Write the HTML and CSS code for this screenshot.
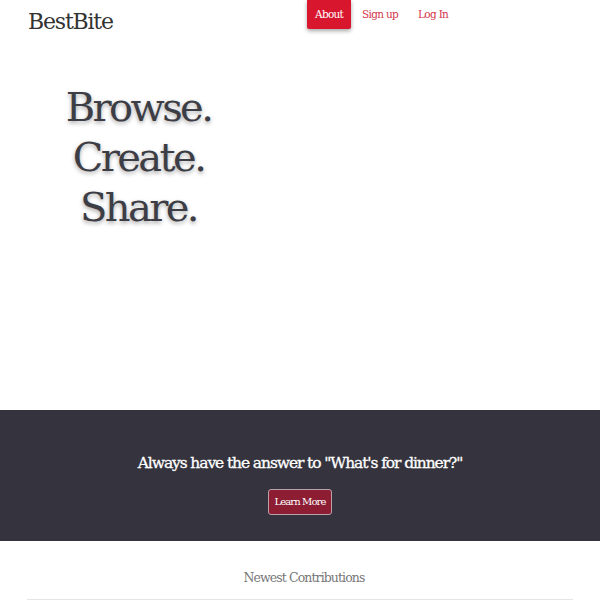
FILE: index.html
```html
<!DOCTYPE html>
<html>
<head>
<meta charset="utf-8">
<link rel="stylesheet" href="styles.css">
</head>
<body>
<header class="topbar">
  <div class="brand">BestBite</div>
  <nav class="nav">
    <a class="nav-link active">About</a>
    <a class="nav-link">Sign up</a>
    <a class="nav-link">Log In</a>
  </nav>
</header>
<section class="hero">
  <h1 class="hero-title">Browse.<br>Create.<br>Share.</h1>
</section>
<section class="band">
  <h2 class="band-title">Always have the answer to "What's for dinner?"</h2>
  <a class="band-btn">Learn More</a>
</section>
<section class="newest">
  <h3 class="newest-title">Newest Contributions</h3>
  <hr class="rule">
</section>
</body>
</html>
```
FILE: styles.css
```css
* { box-sizing: border-box; }
body {
  margin: 0;
  font-family: "DejaVu Serif", serif;
  background: #fff;
  color: #333;
}
.topbar {
  display: flex;
  align-items: flex-start;
  height: 40px;
}
.brand {
  font-size: 22px;
  color: #333;
  padding: 9px 0 0 28px;
  width: 307px;
  letter-spacing: -1.2px;
}
.nav {
  display: flex;
  align-items: flex-start;
}
.nav-link {
  font-size: 10.5px;
  color: #d4364a;
  padding: 8px 10px;
  height: 29px;
  letter-spacing: -0.7px;
}
.nav-link.active {
  background: #d8172f;
  color: #fff;
  border-radius: 0 0 2px 2px;
  box-shadow: 0 2px 4px rgba(0,0,0,0.35);
  padding: 8px 8px;
}
.nav-link + .nav-link { padding-left: 11px; padding-right: 9px; }
.hero {
  height: 370px;
  padding-top: 42px;
}
.hero-title {
  margin: 0;
  width: 277px;
  text-align: center;
  font-weight: normal;
  font-size: 40px;
  line-height: 50px;
  color: #3d3d45;
  letter-spacing: -2.6px;
  text-shadow: 0 2px 4px rgba(0,0,0,0.35);
}
.band {
  background: #35333d;
  height: 131px;
  display: flex;
  flex-direction: column;
  align-items: center;
  padding-top: 44px;
}
.band-title {
  margin: 0;
  font-weight: normal;
  font-size: 15.5px;
  color: #fff;
  letter-spacing: -1.1px;
  -webkit-text-stroke: 0.3px #fff;
}
.band-btn {
  margin-top: 17px;
  background: #8c1d33;
  color: #fff;
  font-size: 10px;
  line-height: 12px;
  padding: 6px 6px 6px;
  border: 1px solid #b9a3aa;
  border-radius: 3px;
  letter-spacing: -0.9px;
}
.newest {
  padding: 29px 27px 0;
}
.newest-title {
  margin: 0;
  text-align: center;
  font-weight: normal;
  font-size: 12.5px;
  color: #777;
  letter-spacing: -0.9px;
  padding-left: 8px;
}
.rule {
  margin: 14px 0 0;
  border: 0;
  border-top: 1px solid #e5e5e5;
}
```
